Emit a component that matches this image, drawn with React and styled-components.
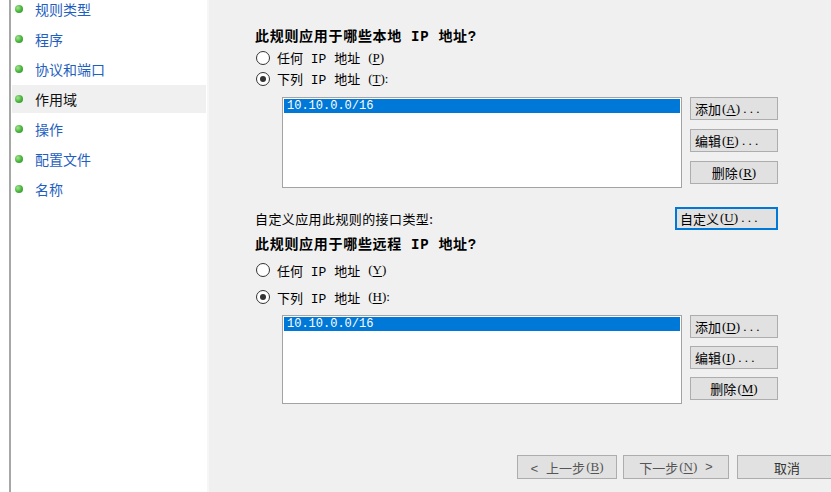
import React from 'react';
import styled, { createGlobalStyle } from 'styled-components';

const GlobalStyle = createGlobalStyle`
  html, body {
    margin: 0;
    padding: 0;
    background: #ffffff;
  }
  body {
    font-family: "Liberation Mono", "Noto Sans CJK SC", monospace;
    color: #000000;
  }
`;

const Window = styled.div`
  display: flex;
  width: 831px;
  height: 492px;
  overflow: hidden;
  background: #ffffff;
`;

const Sidebar = styled.ul`
  margin: 0 0 0 9px;
  padding: 0 1px;
  width: 194px;
  border-left: 2px solid #a7a7a7;
  background: #ffffff;
  list-style: none;
  display: flex;
  flex-direction: column;
  gap: 2px;
  box-sizing: content-box;
`;

const StepItem = styled.li`
  display: flex;
  align-items: center;
  gap: 12px;
  height: 28px;
  padding-left: 3px;
  font-family: "Noto Sans CJK SC", sans-serif;
  font-size: 14px;
  color: ${(p) => (p.$active ? '#111111' : '#1f5fbf')};
  background: ${(p) => (p.$active ? '#f0f0f0' : 'transparent')};

  &:first-child {
    margin-top: -5px;
  }
`;

const Bullet = styled.span`
  width: 8px;
  height: 8px;
  border-radius: 50%;
  background: radial-gradient(circle at 35% 35%, #a6e58f 0%, #45b23b 55%, #2c8a2a 100%);
  flex-shrink: 0;
`;

const Main = styled.div`
  flex: 1;
  display: flex;
  flex-direction: column;
  padding: 27px 0 13px 46px;
  background: #f0f0f0;
  border-left: 2px solid #f6f6f6;
  overflow: hidden;
`;

const Content = styled.div`
  width: 523px;
  display: flex;
  flex-direction: column;
`;

const Heading = styled.div`
  height: 20px;
  line-height: 20px;
  font-size: 14px;
  font-weight: bold;
  letter-spacing: 0.7px;
  margin-top: ${(p) => p.$top || 0}px;
  white-space: pre;
`;

const RadioRow = styled.label`
  display: flex;
  align-items: center;
  gap: 7px;
  height: ${(p) => p.$h || 21}px;
  margin-top: ${(p) => p.$top || 0}px;
  font-size: 13px;
  white-space: pre;
  padding-left: 1px;
`;

const RadioCircle = styled.span`
  position: relative;
  width: 12px;
  height: 12px;
  border: 1px solid #333333;
  border-radius: 50%;
  background: #ffffff;
  flex-shrink: 0;

  &::after {
    content: '';
    display: ${(p) => (p.$checked ? 'block' : 'none')};
    position: absolute;
    left: 3px;
    top: 3px;
    width: 6px;
    height: 6px;
    border-radius: 50%;
    background: #333333;
  }
`;

const Key = styled.span`
  font-family: "Liberation Serif", serif;
  font-size: 13px;
  margin-left: 1px;

  u {
    text-underline-offset: 2px;
  }
`;

const ListRow = styled.div`
  display: flex;
  gap: 8px;
  margin-top: ${(p) => p.$top || 0}px;
  padding-left: 27px;
`;

const ListBox = styled.div`
  width: 400px;
  height: ${(p) => p.$h}px;
  border: 1px solid #a3a3a3;
  background: #ffffff;
  padding: 1px;
  box-sizing: border-box;
`;

const ListEntry = styled.div`
  height: 14px;
  line-height: 14px;
  padding-left: 3px;
  background: #0078d7;
  color: #ffffff;
  font-family: "Liberation Mono", monospace;
  font-size: 12px;
`;

const ButtonColumn = styled.div`
  display: flex;
  flex-direction: column;
  gap: ${(p) => p.$gap}px;
`;

const Button = styled.button`
  width: ${(p) => p.$w || 88}px;
  height: 23px;
  padding: 0 0 0 ${(p) => (p.$center ? 0 : 4)}px;
  margin: 0;
  display: flex;
  align-items: center;
  justify-content: ${(p) => (p.$center ? 'center' : 'flex-start')};
  font-family: "Liberation Mono", "Noto Sans CJK SC", monospace;
  font-size: 13px;
  color: ${(p) => p.$color || '#000000'};
  background: #e1e1e1;
  border: 1px solid ${(p) => (p.$focus ? '#0078d7' : '#adadad')};
  box-shadow: ${(p) => (p.$focus ? 'inset 0 0 0 1px #0078d7' : 'none')};
  white-space: pre;
  box-sizing: border-box;
`;

const InterfaceRow = styled.div`
  display: flex;
  align-items: center;
  justify-content: space-between;
  height: 24px;
  margin-top: 18px;
`;

const Label = styled.span`
  font-family: "Noto Sans CJK SC", sans-serif;
  font-size: 13px;
  letter-spacing: 0.4px;
`;

const Footer = styled.div`
  margin-top: auto;
  margin-left: 262px;
  display: flex;
  gap: 6px;
  height: 24px;
`;

const FooterButton = styled(Button)`
  height: 24px;
  margin-left: ${(p) => p.$gapLeft || 0}px;
  flex-shrink: 0;
`;

const steps = ['规则类型', '程序', '协议和端口', '作用域', '操作', '配置文件', '名称'];

function Accel({ k, tail = '' }) {
  return (
    <Key>
      (<u>{k}</u>){tail}
    </Key>
  );
}

function AddressSection({ keys, listHeight, listTop, btnGap }) {
  return (
    <ListRow $top={listTop}>
      <ListBox $h={listHeight}>
        <ListEntry>10.10.0.0/16</ListEntry>
      </ListBox>
      <ButtonColumn $gap={btnGap}>
        <Button>添加<Accel k={keys[0]} tail=" . . ." /></Button>
        <Button>编辑<Accel k={keys[1]} tail=" . . ." /></Button>
        <Button $center>删除<Accel k={keys[2]} /></Button>
      </ButtonColumn>
    </ListRow>
  );
}

export default function App() {
  return (
    <Window>
      <GlobalStyle />
      <Sidebar>
        {steps.map((step) => (
          <StepItem key={step} $active={step === '作用域'}>
            <Bullet />
            {step}
          </StepItem>
        ))}
      </Sidebar>
      <Main>
        <Content>
          <Heading>此规则应用于哪些本地 IP 地址?</Heading>
          <RadioRow>
            <RadioCircle />
            任何 IP 地址<Accel k="P" />
          </RadioRow>
          <RadioRow>
            <RadioCircle $checked />
            下列 IP 地址<Accel k="T" tail=":" />
          </RadioRow>
          <AddressSection keys={['A', 'E', 'R']} listHeight={91} listTop={8} btnGap={9} />

          <InterfaceRow>
            <Label>自定义应用此规则的接口类型:</Label>
            <Button $w={103} $focus>自定义<Accel k="U" tail=" . . ." /></Button>
          </InterfaceRow>

          <Heading $top={5}>此规则应用于哪些远程 IP 地址?</Heading>
          <RadioRow $h={22} $top={4}>
            <RadioCircle />
            任何 IP 地址<Accel k="Y" />
          </RadioRow>
          <RadioRow $h={22} $top={5}>
            <RadioCircle $checked />
            下列 IP 地址<Accel k="H" tail=":" />
          </RadioRow>
          <AddressSection keys={['D', 'I', 'M']} listHeight={89} listTop={7} btnGap={8} />
        </Content>

        <Footer>
          <FooterButton $w={100} $center $color="#555555">&lt; 上一步<Accel k="B" /></FooterButton>
          <FooterButton $w={106} $center $color="#555555">下一步<Accel k="N" /> &gt;</FooterButton>
          <FooterButton $w={100} $center $gapLeft={2} $color="#333333">取消</FooterButton>
        </Footer>
      </Main>
    </Window>
  );
}
